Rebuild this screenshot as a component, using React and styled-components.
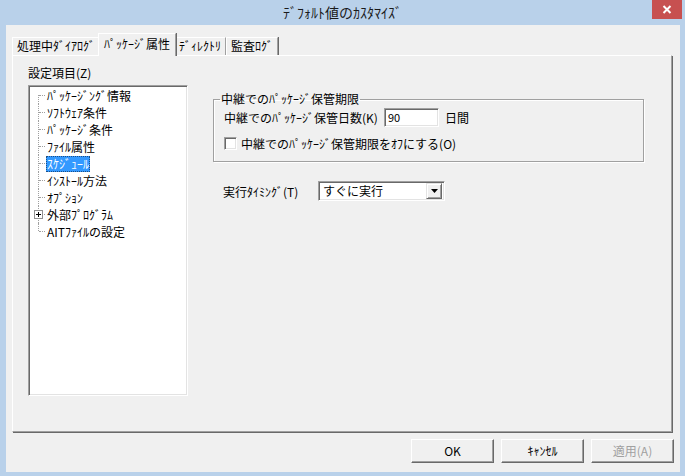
import styled, { createGlobalStyle } from "styled-components";

const GlobalStyle = createGlobalStyle`
  html, body {
    margin: 0;
    padding: 0;
    background: #ffffff;
  }
  body {
    font-family: "Noto Sans CJK JP", "Liberation Sans", sans-serif;
    font-size: 12px;
    color: #000;
  }
  * {
    box-sizing: border-box;
  }
`;

const Window = styled.div`
  width: 685px;
  height: 476px;
  background: #b9d1ea;
  display: flex;
  flex-direction: column;
`;

const TitleBar = styled.div`
  height: 25px;
  display: grid;
  grid-template-columns: 1fr auto 1fr;
  align-items: start;
`;

const Title = styled.div`
  grid-column: 2;
  font-size: 14px;
  line-height: 25px;
  color: #1a1a1a;
`;

const CloseButton = styled.div`
  grid-column: 3;
  justify-self: end;
  width: 30px;
  height: 19px;
  margin-right: 3px;
  background: #c75050;
  display: flex;
  align-items: center;
  justify-content: center;
`;

const Client = styled.div`
  flex: 1;
  margin: 0 5px 4px 6px;
  background: #f0f0f0;
  display: flex;
  flex-direction: column;
  padding: 8px 8px 0 6px;
`;

const TabStrip = styled.div`
  height: 22px;
  display: flex;
  align-items: flex-end;
  position: relative;
  z-index: 1;
`;

const Tab = styled.div`
  height: ${(p) => (p.$active ? 23 : 18)}px;
  margin: 0 ${(p) => (p.$active ? -2 : 0)}px ${(p) => (p.$active ? -1 : 0)}px;
  padding: ${(p) => (p.$active ? "2px 5px 0" : "0 4px")};
  line-height: 16px;
  white-space: nowrap;
  background: #f0f0f0;
  border-top: 1px solid #ffffff;
  border-left: 1px solid #ffffff;
  border-right: 1px solid #a0a0a0;
  box-shadow: 1px 0 0 #696969;
  position: relative;
  z-index: ${(p) => (p.$active ? 2 : 1)};
`;

const Panel = styled.div`
  height: 377px;
  border: 1px solid;
  border-color: #ffffff #a0a0a0 #a0a0a0 #ffffff;
  box-shadow: 1px 1px 0 #696969;
  display: flex;
  align-items: flex-start;
`;

const LeftColumn = styled.div`
  padding: 10px 0 0 15px;
  display: flex;
  flex-direction: column;
`;

const Caption = styled.div`
  line-height: 14px;
  margin-bottom: 5px;
  white-space: nowrap;
`;

const TreeBox = styled.ul`
  width: 160px;
  height: 311px;
  margin: 0;
  padding: 1px;
  list-style: none;
  background: #ffffff;
  border: 1px solid;
  border-color: #a0a0a0 #ffffff #ffffff #a0a0a0;
  box-shadow: inset 1px 1px 0 #696969, inset -1px -1px 0 #e3e3e3;
`;

const TreeItem = styled.li`
  position: relative;
  height: 17px;
  padding-left: 16px;
  display: flex;
  align-items: center;
  white-space: nowrap;

  &::before {
    content: "";
    position: absolute;
    left: 8px;
    top: 0;
    bottom: 0;
    border-left: 1px dotted #a0a0a0;
  }
  &:first-child::before {
    top: 8px;
  }
  &:last-child::before {
    bottom: 9px;
  }
  &::after {
    content: "";
    position: absolute;
    left: 9px;
    width: 6px;
    top: 8px;
    border-top: 1px dotted #a0a0a0;
  }
`;

const ItemLabel = styled.span`
  height: 16px;
  line-height: 16px;
  padding: 0 1px;
  background: ${(p) => (p.$selected ? "#3399ff" : "transparent")};
  color: ${(p) => (p.$selected ? "#ffffff" : "#000000")};
  outline: ${(p) => (p.$selected ? "1px dotted #1c4f86" : "none")};
  outline-offset: -1px;
`;

const Expander = styled.span`
  position: absolute;
  left: 4px;
  top: 4px;
  width: 9px;
  height: 9px;
  background: #ffffff;
  border: 1px solid #919191;
  z-index: 1;
  display: flex;
  align-items: center;
  justify-content: center;
`;

const RightColumn = styled.div`
  margin-left: 25px;
  display: flex;
  flex-direction: column;
`;

const GroupBox = styled.fieldset`
  width: 431px;
  margin: 36px 0 0;
  padding: 2px 8px 10px 9px;
  border: 1px solid #a0a0a0;
  box-shadow: inset 1px 1px 0 #ffffff, 1px 1px 0 #ffffff;
`;

const Legend = styled.legend`
  padding: 0 1px;
  margin-left: -3px;
  line-height: 14px;
  white-space: nowrap;
`;

const FieldRow = styled.div`
  display: flex;
  align-items: center;
  height: ${(p) => p.$h || 19}px;
  margin-top: ${(p) => p.$mt || 0}px;
  padding-left: 1px;
  white-space: nowrap;
`;

const sunken = `
  background: #ffffff;
  border: 1px solid;
  border-color: #a0a0a0 #ffffff #ffffff #a0a0a0;
  box-shadow: inset 1px 1px 0 #696969, inset -1px -1px 0 #e3e3e3;
`;

const TextBox = styled.div`
  ${sunken}
  width: 55px;
  height: 19px;
  margin: 0 6px 0 6px;
  padding-left: 3px;
  line-height: 17px;
  font-size: 11px;
`;

const CheckBox = styled.span`
  ${sunken}
  width: 13px;
  height: 13px;
  margin-right: 4px;
`;

const TimingRow = styled.div`
  display: flex;
  align-items: center;
  margin-top: 19px;
  padding-left: 10px;
  height: 20px;
`;

const TimingLabel = styled.span`
  width: 95px;
  white-space: nowrap;
`;

const Combo = styled.div`
  ${sunken}
  width: 127px;
  height: 20px;
  display: flex;
  align-items: center;
  padding: 2px;
`;

const ComboText = styled.span`
  flex: 1;
  padding-left: 2px;
  line-height: 16px;
`;

const DropButton = styled.span`
  width: 16px;
  height: 16px;
  background: #f0f0f0;
  border: 1px solid;
  border-color: #e3e3e3 #696969 #696969 #e3e3e3;
  box-shadow: inset 1px 1px 0 #ffffff, inset -1px -1px 0 #a0a0a0;
  display: flex;
  align-items: center;
  justify-content: center;
`;

const ButtonRow = styled.div`
  display: flex;
  justify-content: flex-end;
  gap: 7px;
  margin: 7px -2px 0 0;
`;

const Button = styled.div`
  width: 83px;
  height: 24px;
  display: flex;
  align-items: center;
  justify-content: center;
  background: #f0f0f0;
  border: 1px solid;
  border-color: #ffffff #696969 #696969 #ffffff;
  box-shadow: inset -1px -1px 0 #a0a0a0;
  color: ${(p) => (p.$disabled ? "#a0a0a0" : "#000000")};
  line-height: 16px;
`;

const treeItems = [
  "ﾊﾟｯｹｰｼﾞﾝｸﾞ情報",
  "ｿﾌﾄｳｪｱ条件",
  "ﾊﾟｯｹｰｼﾞ条件",
  "ﾌｧｲﾙ属性",
  "ｽｹｼﾞｭｰﾙ",
  "ｲﾝｽﾄｰﾙ方法",
  "ｵﾌﾟｼｮﾝ",
  "外部ﾌﾟﾛｸﾞﾗﾑ",
  "AITﾌｧｲﾙの設定",
];

const tabs = ["処理中ﾀﾞｲｱﾛｸﾞ", "ﾊﾟｯｹｰｼﾞ属性", "ﾃﾞｨﾚｸﾄﾘ", "監査ﾛｸﾞ"];

export default function App() {
  return (
    <>
      <GlobalStyle />
      <Window>
        <TitleBar>
          <Title>ﾃﾞﾌｫﾙﾄ値のｶｽﾀﾏｲｽﾞ</Title>
          <CloseButton>
            <svg width="10" height="9" viewBox="0 0 10 9">
              <path d="M1.5 1 L8.5 8 M8.5 1 L1.5 8" stroke="#ffffff" strokeWidth="2" />
            </svg>
          </CloseButton>
        </TitleBar>
        <Client>
          <TabStrip>
            {tabs.map((t, i) => (
              <Tab key={t} $active={i === 1}>
                {t}
              </Tab>
            ))}
          </TabStrip>
          <Panel>
            <LeftColumn>
              <Caption>設定項目(Z)</Caption>
              <TreeBox>
                {treeItems.map((item) => (
                  <TreeItem key={item}>
                    {item === "外部ﾌﾟﾛｸﾞﾗﾑ" && (
                      <Expander>
                        <svg width="5" height="5" viewBox="0 0 5 5">
                          <path d="M0 2.5 H5 M2.5 0 V5" stroke="#000" strokeWidth="1" />
                        </svg>
                      </Expander>
                    )}
                    <ItemLabel $selected={item === "ｽｹｼﾞｭｰﾙ"}>{item}</ItemLabel>
                  </TreeItem>
                ))}
              </TreeBox>
            </LeftColumn>
            <RightColumn>
              <GroupBox>
                <Legend>中継でのﾊﾟｯｹｰｼﾞ保管期限</Legend>
                <FieldRow>
                  中継でのﾊﾟｯｹｰｼﾞ保管日数(K)
                  <TextBox>90</TextBox>
                  日間
                </FieldRow>
                <FieldRow $h={16} $mt={8}>
                  <CheckBox />
                  中継でのﾊﾟｯｹｰｼﾞ保管期限をｵﾌにする(O)
                </FieldRow>
              </GroupBox>
              <TimingRow>
                <TimingLabel>実行ﾀｲﾐﾝｸﾞ(T)</TimingLabel>
                <Combo>
                  <ComboText>すぐに実行</ComboText>
                  <DropButton>
                    <svg width="7" height="4" viewBox="0 0 7 4">
                      <path d="M0 0 H7 L3.5 4 Z" fill="#000" />
                    </svg>
                  </DropButton>
                </Combo>
              </TimingRow>
            </RightColumn>
          </Panel>
          <ButtonRow>
            <Button>OK</Button>
            <Button>ｷｬﾝｾﾙ</Button>
            <Button $disabled>適用(A)</Button>
          </ButtonRow>
        </Client>
      </Window>
    </>
  );
}
